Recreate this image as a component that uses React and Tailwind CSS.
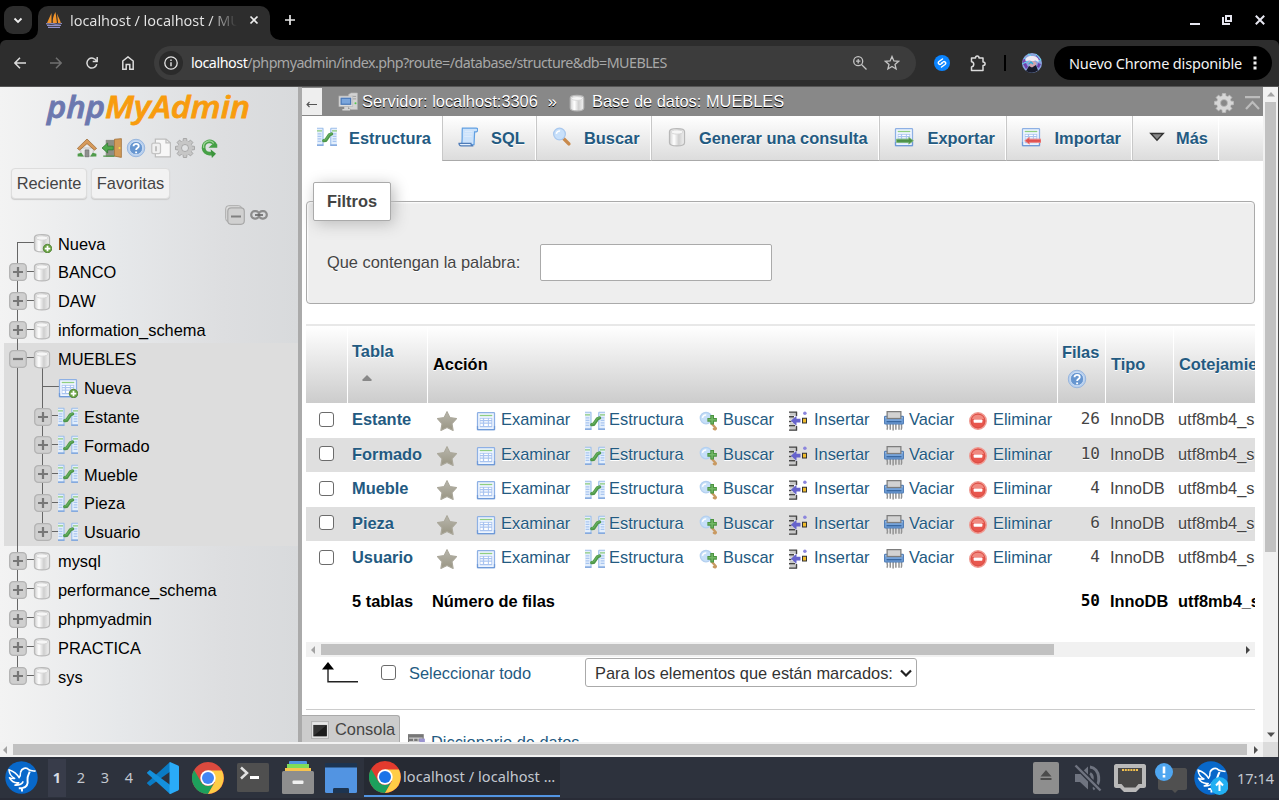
import React from "react";

const Svg = ({ className = "w-5 h-5", box = "0 0 16 16", children }) => (
  <svg viewBox={box} className={"block shrink-0 " + className} fill="none">
    {children}
  </svg>
);

/* ---------- phpMyAdmin icons ---------- */
const Structure = ({ className }) => (
  <Svg className={className}>
    <path d="M0 1h4.800v13.500H0zM11 1h5v13.500h-5z" fill="#e4effc" />
    <path d="M4.800 1v13.500H0M0 1h5M11 1v13.500h5M11 1h5" stroke="#9dbfea" strokeWidth=".9" />
    <path d="M0 14.500h5.200M10.600 14.500H16" stroke="#6f9ad8" strokeWidth=".8" />
    <path d="M0 3h4M12 3h4" stroke="#8ccc7c" strokeWidth="1" />
    <path d="M.5 5.500h3M.5 7.500h3M.5 9.500h3M.5 11.500h3M12.500 5.500h3M12.500 7.500h3M12.500 9.500h3M12.500 11.500h3" stroke="#a9c6f0" />
    <path d="M5.400 10.900l1.600-.3L10 6.200l1.600-.6" stroke="#4c9648" strokeWidth="2.700" strokeLinecap="round" strokeLinejoin="round" />
    <path d="M5.600 10.400l1.400-.3L10 5.800l1.400-.5" stroke="#66b05e" strokeWidth="1" strokeLinecap="round" strokeLinejoin="round" />
  </Svg>
);
const Browse = ({ className, children }) => (
  <Svg className={className}>
    <rect x="1.200" y="1.200" width="13.600" height="13.600" rx=".6" fill="#eef5fe" stroke="#8db0e4" />
    <path d="M1.200 12v2.800h13.600V12" stroke="#6f9ad8" />
    <path d="M3 3.600h10" stroke="#8fce80" />
    <path d="M3 5.500h10v7.500H3z" fill="#a9c4f0" />
    <path d="M3.500 6.200h2v1h-2zM6.500 6.200h3v1h-3zM10.300 6.200h2v1h-2zM3.500 8.200h2v1h-2zM6.500 8.200h3v1h-3zM10.300 8.200h2v1h-2zM3.500 10.200h2v1.800h-2zM6.500 10.200h3v1.800h-3zM10.300 10.200h2v1.800h-2z" fill="#fff" />
    {children}
  </Svg>
);
const Db = ({ className, plus }) => (
  <Svg className={className}>
    <defs>
      <linearGradient id="cyl" x1="0" x2="1" y1="0" y2="0">
        <stop offset="0" stopColor="#d0d0d0" />
        <stop offset=".3" stopColor="#fff" />
        <stop offset=".62" stopColor="#cfcfcf" />
        <stop offset="1" stopColor="#f2f2f2" />
      </linearGradient>
    </defs>
    <path d="M2 3.500C2 .5 14 .5 14 3.500v9c0 3.400-12 3.400-12 0z" fill="url(#cyl)" stroke="#b8b8b8" />
    <ellipse cx="8" cy="4" rx="4.800" ry="1.700" fill="#f6f6f6" stroke="#d2d2d2" strokeWidth=".7" />
    {plus && <Plus />}
  </Svg>
);
const Plus = () => (
  <g>
    <circle cx="12.400" cy="12.400" r="3.400" fill="#6ba344" stroke="#4d8030" strokeWidth=".7" />
    <path d="M12.400 10.200v4.400M10.200 12.400h4.400" stroke="#fff" strokeWidth="1.400" />
  </g>
);
const Search = () => (
  <Svg>
    <path d="M9.500 9.500l4 4" stroke="#c98a4c" strokeWidth="2.800" strokeLinecap="round" />
    <circle cx="6" cy="5.600" r="4.700" fill="#c8e0fa" stroke="#a9c8ee" />
    <path d="M3.500 5.500a2.600 2.600 0 0 1 3-2.300" stroke="#fff" strokeWidth="1.200" />
  </Svg>
);
const SearchPlus = () => (
  <Svg>
    <path d="M10.500 10.500l2.800 3c.8 1-.5 1.500-1.500 .8" stroke="#c99a62" strokeWidth="1.800" strokeLinecap="round" />
    <circle cx="5.600" cy="5.600" r="4.600" fill="#c6dff8" stroke="#b4d0f0" />
    <path d="M2.800 5.500a2.600 2.600 0 0 1 3-2.300" stroke="#fff" strokeWidth="1.200" />
    <path d="M10.500 3.200v7.600M6.700 7h7.600" stroke="#4b9440" strokeWidth="3" />
    <path d="M10.500 4v6M7.500 7h6" stroke="#72b866" strokeWidth="1.200" />
  </Svg>
);
const Scroll = () => (
  <Svg>
    <path d="M3.500 .8h11c1.700 0 1.700 3 0 3H13.300L12.800 14H2.800C3.800 11 3 5 3.500 .8z" fill="#cbe2fb" stroke="#62a0e2" />
    <path d="M.8 13h9.500c0 1.200.8 2 2 2H2.500C1.400 15 .8 14 .8 13z" fill="#e6f1fd" stroke="#4f7cb8" />
    <path d="M5.500 3.500h6M5 5.500h6.500M5 7.500h6" stroke="#dceafc" />
  </Svg>
);
const Export = () => (
  <Browse>
    <path d="M2 9.700h9.800V8.300l3.700 2.700-3.700 2.700v-1.400H2z" fill="#4c9148" stroke="#7cba72" strokeWidth=".6" />
  </Browse>
);
const Import = () => (
  <Browse>
    <path d="M16 9.700H6.700V8.300L3 11l3.700 2.700v-1.400H16z" fill="#e05050" stroke="#f08b88" strokeWidth=".7" />
  </Browse>
);
const Star = () => (
  <Svg>
    <defs>
      <linearGradient id="starfill" x1="0" x2="0" y1="0" y2="1">
        <stop offset="0" stopColor="#b8b6ac" />
        <stop offset="1" stopColor="#999583" />
      </linearGradient>
    </defs>
    <path d="M8 .5l2.300 4.700 5.300.9-3.600 4 .9 5.400L8 13.200l-4.900 2.300.9-5.400-3.600-4 5.300-.9z" fill="url(#starfill)" stroke="#aaa79a" strokeWidth=".9" strokeLinejoin="round" />
  </Svg>
);
const Insert = () => (
  <Svg>
    <path d="M.5.7h6v3h-6zM.5 5h4v2h-4zM.5 9.300h4v2h-4zM.5 12.700h6v3h-6z" fill="#c9c9c9" />
    <path d="M0 .9h6.500M6 1v3M0 4.600h4M0 8.400h2M0 11.800h5M0 15.300h6.500M6 12v3" stroke="#444" strokeWidth="1.100" />
    <path d="M1.500 7.700L6 3.700v2.500h3.200v3H6v2.500z" fill="#6663cc" />
    <rect x="10.800" y="5.800" width="3.200" height="3.800" fill="#f0bc2c" stroke="#333" strokeWidth=".8" />
    <circle cx="12.700" cy="1.800" r="1.400" fill="#8b85dd" />
  </Svg>
);
const Shred = () => (
  <Svg>
    <path d="M2.500 10c-.5 2 1.200 3-.2 5M5 10v5M7.300 10v5.500M9.500 10v5M12 10v5M14 10c-.3 2 .7 3-.3 5" stroke="#929292" strokeWidth="1.200" />
    <rect x=".5" y="4.200" width="15" height="6.200" rx=".6" fill="#75a3da" stroke="#4b7ab5" strokeWidth=".9" />
    <path d="M1 5.400h14" stroke="#a8c9ef" />
    <rect x="2.500" y=".5" width="11" height="5.500" fill="#d2d2d2" stroke="#7d7d7d" />
    <path d="M2 8.600h12" stroke="#315f99" />
  </Svg>
);
const Drop = () => (
  <Svg>
    <circle cx="8" cy="8" r="6.600" fill="#e85a50" stroke="#ef9a92" strokeWidth="1.200" />
    <circle cx="8" cy="8" r="5.400" fill="#e8574e" stroke="#d64c43" strokeWidth=".6" />
    <path d="M3.200 6.300a5 4.500 0 0 1 9.600 0" fill="#f08a80" />
    <rect x="4.500" y="6.800" width="7" height="2.500" rx=".6" fill="#fff" />
  </Svg>
);
const Help = ({ className }) => (
  <Svg className={className}>
    <circle cx="8" cy="8" r="7" fill="#b9d0ee" stroke="#8fb0dc" strokeWidth=".7" />
    <circle cx="8" cy="8" r="5.300" fill="#6796d0" stroke="#e5effb" strokeWidth=".5" />
    <path d="M6 6.600c0-2.600 4.200-2.500 4.200-.1C10.200 8 8.100 8 8.100 9.500M8.100 10.700v1.400" stroke="#fff" strokeWidth="1.500" />
  </Svg>
);
const GearShape = ({ fill, stroke }) => (
  <g>
    {[0, 45, 90, 135, 180, 225, 270, 315].map((a) => (
      <path key={a} d="M6.700 0.400h2.600l.5 3.500H6.200z" fill={fill} stroke={stroke} strokeWidth=".6" transform={`rotate(${a} 8 8)`} />
    ))}
    <circle cx="8" cy="8" r="4.300" stroke={fill} strokeWidth="2.900" />
    <circle cx="8" cy="8" r="2.800" stroke={stroke} strokeWidth=".6" />
  </g>
);
const Home = () => (
  <Svg>
    <path d="M3 8h10v6.500H3z" fill="#e9e9e9" stroke="#aaa" strokeWidth=".5" />
    <path d="M6.500 9.500h3V15h-3z" fill="#8f8f8f" stroke="#666" strokeWidth=".5" />
    <path d="M8 .8L.3 8.300l1.700 1.400L8 4.500l6 5.200 1.700-1.400z" fill="#d79a5a" stroke="#9c6a36" strokeWidth=".6" />
    <path d="M.5 12.500l3-.8 2 3H.5zM15.500 12.500l-3-.8-2 3h5z" fill="#4f9b4a" />
  </Svg>
);
const Exit = () => (
  <Svg>
    <path d="M3 1.500h7V15H3z" fill="#8d8f86" />
    <path d="M10 1l5.500-.5v15L10 14.500z" fill="#d29a57" stroke="#9d6b33" strokeWidth=".6" />
    <path d="M0 8l4.500-4v2.500H9v3H4.500V12z" fill="#4fa84c" stroke="#2f7a30" strokeWidth=".6" />
    <circle cx="14" cy="8" r=".8" fill="#f4e04a" />
    <path d="M1 14.500h9" stroke="#4e9448" />
  </Svg>
);
const Docs = () => (
  <Svg>
    <path d="M3.500 .8h8.500l3.500 3V15h-12z" fill="#f7f7f7" stroke="#bdbdbd" />
    <path d="M12 .8v3h3.500" stroke="#bdbdbd" />
    <rect x=".6" y="4" width="7" height="8.500" rx="1.500" fill="#f0f0f0" stroke="#c4c4c4" />
    <path d="M4 6.500v4" stroke="#bbb" strokeWidth="1.400" />
  </Svg>
);
const Reload = () => (
  <Svg>
    <path d="M12.300 5.800A4.900 4.900 0 1 0 7.500 12.500h2" stroke="#46a046" strokeWidth="3" />
    <path d="M8.500 9l4.300 3.500-3.300 3.500z" fill="#3c943c" />
    <path d="M6.800 7.800h7V5h-4z" fill="#46a046" />
    <path d="M11 4.300A4.500 4.500 0 0 0 3 8" stroke="#9bd494" strokeWidth="1" />
  </Svg>
);
const Toggle = ({ minus }) => (
  <Svg className="w-[18px] h-[18px]" box="0 0 18 18">
    <rect x=".7" y=".7" width="16.600" height="16.600" rx="3.600" fill="#cfcfcf" stroke="#b3b3b3" strokeWidth="1.300" />
    <path d={minus ? "M4 9h10" : "M4 9h10M9 4v10"} stroke="#777" strokeWidth="2.200" />
  </Svg>
);

/* ---------- browser chrome ---------- */
const WF = "font-['Noto_Sans','Open_Sans',sans-serif]";

function Sailboat() {
  return (
    <Svg className="w-4 h-4">
      <path d="M5.500 1L1 11h4.500zM9.500 0C7 4 6.500 8 6.800 11H11zM11 1.500c1.500 4 3 6 3.800 9.500H12z" fill="#f0932b" />
      <path d="M0 11.500c3 1 5-.5 8 .4s5 .3 8-.5M1 13.500h14M2 15.300h12" stroke="#9090c8" strokeWidth="1.200" />
    </Svg>
  );
}

function TabStrip() {
  return (
    <div className="h-10 bg-black flex items-end shrink-0">
      <div className="self-center w-7 h-7 ml-1 rounded-[9px] bg-[#2d2d2d] flex items-center justify-center">
        <Svg className="w-3 h-3" box="0 0 12 12"><path d="M2.500 4.500L6 8l3.500-3.500" stroke="#eee" strokeWidth="1.800" /></Svg>
      </div>
      <div className="relative ml-[6px] w-[232px] h-[34px] rounded-t-[10px] bg-[#2d2d2d] flex items-center pl-2 pb-[6px] pr-[11px]">
        <svg viewBox="0 0 10 10" className="absolute -left-[10px] bottom-0 w-[10px] h-[10px]"><path d="M10 0v10H0A10 10 0 0 0 10 0z" fill="#2d2d2d" /></svg>
        <svg viewBox="0 0 10 10" className="absolute -right-[10px] bottom-0 w-[10px] h-[10px]"><path d="M0 0v10h10A10 10 0 0 1 0 0z" fill="#2d2d2d" /></svg>
        <Sailboat />
        <div className={"ml-2 w-[167px] overflow-hidden whitespace-nowrap text-[14.5px] leading-5 tracking-[-0.05px] text-transparent bg-clip-text bg-[linear-gradient(to_right,#e6e6e6_84%,#2d2d2d_100%)] " + WF}>localhost / localhost / MUEBLES</div>
        <Svg className="ml-auto w-[10px] h-[10px]" box="0 0 10 10"><path d="M1.500 1.500l7 7M8.500 1.500l-7 7" stroke="#eee" strokeWidth="1.700" /></Svg>
      </div>
      <Svg className="ml-[15px] mb-[15px] w-[10px] h-[10px]" box="0 0 10 10"><path d="M5 0v10M0 5h10" stroke="#e8e8e8" strokeWidth="1.700" /></Svg>
      <div className="ml-auto flex items-center h-full pr-[14px]">
        <Svg className="w-[10px] h-[10px]" box="0 0 10 10"><path d="M0 9h10" stroke="#e6e6f0" strokeWidth="2" /></Svg>
        <Svg className="ml-[22px] w-[10px] h-[10px]" box="0 0 10 10"><path d="M4 1h5v5H4z" stroke="#e6e6f0" strokeWidth="2" /><path d="M1 2v7h7" stroke="#e6e6f0" strokeWidth="2" /></Svg>
        <Svg className="ml-[23px] w-[10px] h-[10px]" box="0 0 10 10"><path d="M.8.8l8.400 8.400M9.200.8L.8 9.200" stroke="#e6e6f0" strokeWidth="2" /></Svg>
      </div>
    </div>
  );
}

function Toolbar() {
  return (
    <div className="bg-black shrink-0">
      <div className="h-[47px] bg-[#2d2d2d] rounded-t-[6px] border-b border-[#555] flex items-center">
        <Svg className="ml-[14px] w-3 h-3" box="0 0 12 12"><path d="M12 6H1.200M6 .8L.9 6 6 11.200" stroke="#dcdcdc" strokeWidth="1.500" /></Svg>
        <Svg className="ml-6 w-3 h-3" box="0 0 12 12"><path d="M0 6h10.800M6 .8L11.100 6 6 11.200" stroke="#707070" strokeWidth="1.500" /></Svg>
        <Svg className="ml-[24px] w-3 h-3" box="0 0 12 12"><path d="M10.800 7.200A5 5 0 1 1 10.500 4M11.200 0v4.500H6.700" stroke="#dcdcdc" strokeWidth="1.500" /></Svg>
        <Svg className="ml-6 w-3 h-[14px]" box="0 0 12 14"><path d="M.8 5L6 .9 11.200 5v8.200H7.800V8.500H4.200v4.700H.8z" stroke="#dcdcdc" strokeWidth="1.500" /></Svg>
        <div className="ml-5 w-[762px] h-[34px] rounded-full bg-[#3c3c3c] flex items-center pl-[5px] pr-[16px]">
          <div className="w-6 h-6 rounded-full bg-[#2b2b2b] flex items-center justify-center">
            <Svg className="w-[14px] h-[14px]" box="0 0 14 14"><circle cx="7" cy="7" r="6.200" stroke="#e4e4e4" strokeWidth="1.300" /><path d="M7 6.200v4M7 3.500v1.500" stroke="#e4e4e4" strokeWidth="1.400" /></Svg>
          </div>
          <div className={"ml-2 whitespace-nowrap text-[14.3px] leading-5 tracking-[-0.56px] text-[#a8a8a8] " + WF}><span className="text-white tracking-[-0.45px]">localhost</span>/phpmyadmin/index.php?route=/database/structure&amp;db=MUEBLES</div>
          <Svg className="ml-auto w-[14px] h-[14px]" box="0 0 14 14"><circle cx="5.200" cy="5.200" r="4.500" stroke="#c4c4c4" strokeWidth="1.300" /><path d="M8.500 8.500l5 5M5.200 3v4.400M3 5.200h4.400" stroke="#c4c4c4" strokeWidth="1.300" /></Svg>
          <Svg className="ml-[17px] w-4 h-4"><path d="M8 1.500l1.900 4.400 4.700.4-3.600 3.100 1.100 4.600L8 11.500 3.900 14 5 9.400 1.400 6.300l4.700-.4z" stroke="#c4c4c4" strokeWidth="1.300" /></Svg>
        </div>
        <Svg className="ml-[18px] w-4 h-4"><circle cx="8" cy="8" r="8" fill="#0a84ff" /><path d="M8.500 4L5 6.500C3 8 5.500 10.300 7 9l1.500-1M7.500 12L11 9.500C13 8 10.500 5.700 9 7L7.500 8" stroke="#fff" strokeWidth="1.500" strokeLinecap="round" /></Svg>
        <Svg className="ml-5 w-[17px] h-[17px]" box="0 0 17 17"><path d="M1.500 3h4c0-2.700 3.500-2.700 3.500 0h4v4c2.800 0 2.800 3.500 0 3.500v5h-11.500V12c3-.3 3-5 0-5.200z" stroke="#dcdcdc" strokeWidth="1.500" strokeLinejoin="round" /></Svg>
        <div className="ml-[17px] w-[2px] h-4 bg-black" />
        <Svg className="ml-4 w-5 h-5" box="0 0 20 20">
          <circle cx="10" cy="10" r="10" fill="#8aa4de" />
          <path d="M2 5l4 3-6 3M14 1l5 6-4 1M6 1l3 2" fill="#7b43b4" stroke="#5be0f0" />
          <path d="M3.500 8C3 4 7 2.500 11 3s6.500 2.500 5.500 6l-3-1.500-3.500 1-2-1z" fill="#f1eaf4" />
          <path d="M6.500 9c2-1.500 7-1.500 8 1.500l-2 4H8z" fill="#d0a4ae" />
          <path d="M1 11l3-1 2 4-2 2zM16 10l3 1-2 4-2-1z" fill="#6c3fae" />
          <path d="M4 18l3-5 3 1.500 4-2.500 2 5.500a10 10 0 0 1-12 .5z" fill="#171a2b" />
          <path d="M7 11l2-2 2 2" stroke="#28aee0" strokeWidth="1.500" />
        </Svg>
        <div className="ml-3 w-[218px] h-[34px] rounded-full bg-black flex items-center pl-[15px] pr-[15px]">
          <span className={"whitespace-nowrap text-[14.5px] leading-5 tracking-[-0.16px] text-[#f2f2f2] " + WF}>Nuevo Chrome disponible</span>
          <Svg className="ml-auto w-[4px] h-[14px]" box="0 0 4 14"><path d="M.5.500h3v3h-3zM.5 5.500h3v3h-3zM.5 10.500h3v3h-3z" fill="#f2f2f2" /></Svg>
        </div>
      </div>
    </div>
  );
}

/* ---------- sidebar ---------- */
function TreeRow({ icon, toggle, label, sub, first, last, inner, innerEnd }) {
  return (
    <div className="relative h-[28.860px] flex items-center text-[16.400px] text-black">
      <div className={"absolute left-[13px] w-px bg-[#666] " + (first ? "top-1/2 bottom-0" : last ? "top-0 h-1/2" : "top-0 bottom-0")} />
      {inner && <div className={"absolute left-[38px] w-px bg-[#666] " + (inner === "start" ? "top-1/2 bottom-0" : innerEnd ? "top-0 h-1/2" : "top-0 bottom-0")} />}
      <div className={"absolute top-[13px] h-px bg-[#666] " + (sub ? "left-[38px] w-[18px]" : "left-[13px] w-[18px]")} />
      <div className={"relative shrink-0 " + (sub ? "ml-[30px] w-[24px]" : "ml-[5px] w-[23px]")}>{toggle && <Toggle minus={toggle === "minus"} />}</div>
      <div className="relative shrink-0 w-5">{icon}</div>
      <span className="relative ml-[6px] pt-px">{label}</span>
    </div>
  );
}

function Sidebar() {
  return (
    <aside className="w-[298px] shrink-0 h-full bg-[linear-gradient(to_right,#f3f3f3_0%,#e6e8ea_40%,#dddee0_75%,#d8dadc_100%)] overflow-hidden">
      <svg viewBox="0 0 298 46" className="block w-[298px] h-[46px]">
        <g fontFamily="'Open Sans', 'Noto Sans', sans-serif" fontStyle="italic" fontWeight="600" fontSize="30">
          <text x="47" y="31" textLength="58" lengthAdjust="spacingAndGlyphs" fill="#6c78af" stroke="#6c78af" strokeWidth=".8">php</text>
          <text x="105" y="31" textLength="145" lengthAdjust="spacingAndGlyphs" fill="#f89c0e" stroke="#f89c0e" strokeWidth=".8">MyAdmin</text>
        </g>
      </svg>
      <div className="flex items-center pl-[77px] gap-[4.500px] h-[30px]">
        <Home />
        <Exit />
        <Help />
        <Docs />
        <Svg><GearShape fill="#c6c6c6" stroke="#999" /></Svg>
        <Reload />
      </div>
      <div className="flex pl-[11px] gap-1 mt-[5px] text-[16.400px] text-[#444]">
        <div className="w-[76px] h-[31px] rounded border border-[#ddd] bg-[#f2f2f2] shadow-[0_1px_1px_#ccc] flex items-center justify-center">Reciente</div>
        <div className="w-[79px] h-[31px] rounded border border-[#ddd] bg-[#f2f2f2] shadow-[0_1px_1px_#ccc] flex items-center justify-center">Favoritas</div>
      </div>
      <div className="flex items-center pl-[225px] mt-[6px] h-5 gap-[5px]">
        <Svg box="0 0 20 20">
          <rect x=".7" y=".7" width="16" height="16" rx="3" fill="#dcdcdc" stroke="#aaa" />
          <rect x="2.800" y="2.800" width="16.500" height="16.500" rx="3.500" fill="#d0d0d0" stroke="#a8a8a8" strokeWidth="1.200" />
          <path d="M6 11.500h10" stroke="#808080" strokeWidth="2" />
        </Svg>
        <Svg className="w-[18px] h-[12px]" box="0 0 18 12">
          <rect x="1.200" y="2.200" width="8" height="7.400" rx="3.500" stroke="#8c8c8c" strokeWidth="2.200" />
          <rect x="8.800" y="2.200" width="8" height="7.400" rx="3.500" stroke="#8c8c8c" strokeWidth="2.200" />
          <path d="M5 6h8" stroke="#666" strokeWidth="1.600" />
        </Svg>
      </div>
      <div className="mt-[4px] pl-1">
        <TreeRow first icon={<Db plus />} label="Nueva" />
        <TreeRow toggle="plus" icon={<Db />} label="BANCO" />
        <TreeRow toggle="plus" icon={<Db />} label="DAW" />
        <TreeRow toggle="plus" icon={<Db />} label="information_schema" />
        <div className="bg-[#ddd] -mt-px pt-px">
          <TreeRow toggle="minus" inner="start" icon={<Db />} label="MUEBLES" />
          <TreeRow sub inner="mid" icon={<Browse><Plus /></Browse>} label="Nueva" />
          <TreeRow sub inner="mid" toggle="plus" icon={<Structure />} label="Estante" />
          <TreeRow sub inner="mid" toggle="plus" icon={<Structure />} label="Formado" />
          <TreeRow sub inner="mid" toggle="plus" icon={<Structure />} label="Mueble" />
          <TreeRow sub inner="mid" toggle="plus" icon={<Structure />} label="Pieza" />
          <TreeRow sub inner="mid" innerEnd toggle="plus" icon={<Structure />} label="Usuario" />
        </div>
        <TreeRow toggle="plus" icon={<Db />} label="mysql" />
        <TreeRow toggle="plus" icon={<Db />} label="performance_schema" />
        <TreeRow toggle="plus" icon={<Db />} label="phpmyadmin" />
        <TreeRow toggle="plus" icon={<Db />} label="PRACTICA" />
        <TreeRow last toggle="plus" icon={<Db />} label="sys" />
      </div>
    </aside>
  );
}

/* ---------- main panel ---------- */
const Server = () => (
  <Svg>
    <path d="M8.500 2l2-1.200h5V14h-5l-2-1z" fill="#d3d3d3" stroke="#b5b5b5" strokeWidth=".5" />
    <path d="M11 3.500h3.500M11 5.500h3.500" stroke="#999" strokeWidth=".7" />
    <rect x=".8" y="3.300" width="11" height="8.200" fill="#dedede" stroke="#bbb" strokeWidth=".6" />
    <rect x="2" y="4.500" width="8.600" height="5.800" fill="#4b79b8" />
    <rect x="3" y="5.500" width="6.600" height="3.800" fill="#7ba6dc" />
    <path d="M5 11.700h3v1.800h1.700v1.300H3.500v-1.300H5z" fill="#d4d4d4" />
    <circle cx="14" cy="9" r=".8" fill="#4fc74a" />
  </Svg>
);

function Tab({ w, icon, gap, label, active, pad }) {
  return (
    <div className={"h-full flex items-center shrink-0 font-bold text-[16.400px] text-[#235a81] " + w + " " + pad + " " + (active ? "bg-white" : "pt-px bg-[linear-gradient(#fff,#dcdcdc)] border-l border-l-[#c8c8c8] border-b border-b-[#aaa] shadow-[inset_-1px_0_0_#fff]")}>
      <div className="shrink-0 pb-[3px]">{icon}</div>
      <span className={"whitespace-nowrap [text-shadow:0_1px_0_#fff] " + gap}>{label}</span>
    </div>
  );
}

const link = "text-[#235a81]";

function Row({ name, rows, odd }) {
  return (
    <div className={"h-[34.500px] flex items-center w-[949px] overflow-hidden whitespace-nowrap text-[16.400px] leading-[25px] text-[#444] [text-shadow:0_1px_0_#fff] " + (odd ? "bg-[#dfdfdf]" : "bg-white")}>
      <div className="w-[46px] shrink-0 pl-[13px] pb-[2px]"><div className="w-[15px] h-[15px] border border-[#6b6b6b] rounded-[3px] bg-white" /></div>
      <div className={"w-[84px] shrink-0 font-bold pb-px " + link}>{name}</div>
      <div className={"w-[622px] shrink-0 flex items-center pb-px [&_svg]:mt-[3px] " + link}>
        <div className="w-[40px] pl-[1px]"><Star /></div>
        <div className="w-[109px] flex items-center gap-[5px]"><Browse />Examinar</div>
        <div className="w-[114px] flex items-center gap-[4px]"><Structure />Estructura</div>
        <div className="w-[90px] flex items-center gap-[4px]"><SearchPlus />Buscar</div>
        <div className="w-[95px] flex items-center gap-[5px]"><Insert />Insertar</div>
        <div className="w-[84px] flex items-center gap-[5px]"><Shred />Vaciar</div>
        <div className="flex items-center gap-[5px]"><Drop />Eliminar</div>
      </div>
      <div className="w-[42px] shrink-0 text-right pb-[2px] text-base font-['DejaVu_Sans_Mono',monospace]">{rows}</div>
      <div className="ml-[10px] w-[68px] shrink-0 pb-px">InnoDB</div>
      <div className="pb-px">utf8mb4_spanish_ci</div>
    </div>
  );
}

function HeadCell({ className, children }) {
  return <div className={"shrink-0 h-full flex flex-col justify-center items-start font-bold [text-shadow:0_1px_0_#fff] " + className}>{children}</div>;
}

function Main() {
  return (
    <main className="relative w-[961px] shrink-0 h-full bg-white overflow-hidden">
      <div className="h-[29px] bg-[#888] flex items-start whitespace-nowrap text-[16.400px] text-white [text-shadow:0_1px_0_#000]">
        <div className="w-5 h-[27px] mt-px shrink-0 bg-[#eee] flex items-center justify-center pt-[6px] pr-[2px]">
          <Svg className="w-[11px] h-[7px]" box="0 0 11 7"><path d="M11 3.500H1M3.500 1L1 3.500 3.500 6" stroke="#555" strokeWidth="1.100" /></Svg>
        </div>
        <div className="flex items-center h-[29px] flex-1 pl-[16px]">
          <Server />
          <span className="ml-1">Servidor: localhost:3306</span>
          <span className="ml-[10px]">»</span>
          <Db className="ml-[10px] w-5 h-[18px] mt-[3px]" />
          <span className="ml-[5px]">Base de datos: MUEBLES</span>
          <Svg className="ml-auto w-5 h-5 mt-[2px]"><GearShape fill="#d6d6d6" stroke="#bbb" /></Svg>
          <Svg className="ml-[11px] mr-[3px] mt-[3px] w-[15px] h-[14px]" box="0 0 15 14"><path d="M0 1.200h15M1 13l6.500-7 6.500 7" stroke="#bcbcbc" strokeWidth="2.200" /></Svg>
        </div>
      </div>
      <nav className="h-[45px] flex">
        <Tab active w="w-[140px]" pad="pl-[15px]" gap="ml-[12px]" icon={<Structure />} label="Estructura" />
        <Tab w="w-[94px]" pad="pl-[15px]" gap="ml-[13px]" icon={<Scroll />} label="SQL" />
        <Tab w="w-[115px]" pad="pl-[15px]" gap="ml-[12px]" icon={<Search />} label="Buscar" />
        <Tab w="w-[228px]" pad="pl-[15px]" gap="ml-[12px]" icon={<Db />} label="Generar una consulta" />
        <Tab w="w-[127px]" pad="pl-[14px]" gap="ml-[13.500px]" icon={<Export />} label="Exportar" />
        <Tab w="w-[126px]" pad="pl-[14px]" gap="ml-[13.500px]" icon={<Import />} label="Importar" />
        <Tab w="w-[87px]" pad="pl-[14px]" gap="ml-[9px]" icon={<Svg><path d="M3 5.200h10L8 10.500z" fill="#888" stroke="#333" strokeWidth="1.100" /></Svg>} label="Más" />
        <div className="flex-1 border-b border-[#ddd] bg-[linear-gradient(#fff,#dcdcdc)]" />
      </nav>

      <section className="relative mt-10 ml-1 w-[949px] h-[103px] rounded border border-[#aaa] bg-[#eee] shadow-[inset_1px_1px_2px_#fff] text-[16.400px] text-[#444] flex items-center pl-5 pt-5">
        <h2 className="absolute left-[6px] -top-[20px] w-[78px] h-[39px] rounded-[2px] border border-[#aaa] bg-white shadow-[3px_3px_15px_#bbb] flex items-center justify-center font-bold">Filtros</h2>
        <label className="w-[213px] [text-shadow:0_1px_0_#fff]">Que contengan la palabra:</label>
        <div className="w-[232px] h-[37px] rounded-[2px] border border-[#aaa] bg-white" />
      </section>

      <section className="mt-5 ml-1 w-[949px]">
        <div className="h-[79px] border-t-2 border-t-[#e8e8e8] flex text-[16.400px] text-[#235a81] overflow-hidden bg-[linear-gradient(#fff,#ccc)]">
          <HeadCell className="w-[42px] border-r border-white"></HeadCell>
          <HeadCell className="w-[80px] pl-1 border-r border-white">
            <span className="leading-6">Tabla</span>
            <Svg className="ml-[10px] mt-[5px] mb-[5px] w-[10px] h-[18px]" box="0 0 10 18"><path d="M5 7L.5 11.500V13h9v-1.500z" fill="#888" /></Svg>
          </HeadCell>
          <HeadCell className="w-[630px] pl-[5px] border-r border-white text-black">Acción</HeadCell>
          <HeadCell className="w-[48px] pl-1 border-r border-white">
            <span className="leading-6">Filas</span>
            <Help className="ml-[5px] mt-[5px] mb-px w-5 h-5" />
          </HeadCell>
          <HeadCell className="w-[68px] pl-[5px] border-r border-white">Tipo</HeadCell>
          <HeadCell className="pl-[5px] whitespace-nowrap">Cotejamiento</HeadCell>
        </div>
        <Row name="Estante" rows="26" />
        <Row name="Formado" rows="10" odd />
        <Row name="Mueble" rows="4" />
        <Row name="Pieza" rows="6" odd />
        <Row name="Usuario" rows="4" />
        <div className="h-[66.500px] flex items-start pt-[13px] text-[16.400px] leading-6 font-bold text-black overflow-hidden whitespace-nowrap">
          <div className="w-[80px] ml-[46px] shrink-0">5 tablas</div>
          <div className="w-[626px] shrink-0">Número de filas</div>
          <div className="w-[42px] shrink-0 text-right text-base font-['DejaVu_Sans_Mono',monospace]">50</div>
          <div className="ml-[10px] w-[68px] shrink-0">InnoDB</div>
          <div>utf8mb4_spanish_ci</div>
        </div>
        <div className="h-[15px] bg-[#f1f1f1] flex items-center">
          <Svg className="ml-1 w-[6px] h-[8px]" box="0 0 6 8"><path d="M5 0v8L1 4z" fill="#a3a3a3" /></Svg>
          <div className="ml-[5px] w-[733px] h-[11px] bg-[#c1c1c1]" />
          <Svg className="ml-auto mr-1 w-[6px] h-[8px]" box="0 0 6 8"><path d="M1 0v8l4-4z" fill="#444" /></Svg>
        </div>
      </section>

      <section className="h-[31px] flex items-center pl-5 text-[16.400px]">
        <Svg className="w-9 h-[22px]" box="0 0 36 22"><path d="M6 5v14.800H36" stroke="#222" strokeWidth="1.400" /><path d="M6 0l6 7.500H0z" fill="#000" /></Svg>
        <div className="ml-[22.500px] w-[15px] h-[15px] border border-[#6b6b6b] rounded-[3px] bg-white" />
        <span className={"ml-[13.500px] w-[176px] pt-px " + link}>Seleccionar todo</span>
        <div className="w-[332px] h-[29px] border border-[#aaa] rounded-[3px] flex items-center pl-[9px] pr-[4px] pt-px whitespace-nowrap text-[#333]">
          Para los elementos que están marcados:
          <Svg className="ml-auto w-3 h-2" box="0 0 12 8"><path d="M1 1.500l5 5 5-5" stroke="#222" strokeWidth="2.200" /></Svg>
        </div>
      </section>
      <div className="mt-[21px] ml-1 w-[949px] h-px bg-[#ccc]" />
      <div className="mt-[20px] ml-[106px] flex items-center gap-[5px] text-[16.400px]">
        <Svg className="w-[18px] h-[18px]"><rect x="0" y="1" width="14" height="13" fill="#777" /><path d="M1 4.500h12M1 7.500h12M5 4v9M9 4v9" stroke="#ccc" /><rect x="10" y="5" width="5" height="5" fill="#9a93d0" /></Svg>
        <span className={link}>Diccionario de datos</span>
      </div>

      <div className="absolute left-0 bottom-0 w-[98px] h-[27px] rounded-tr-[3px] border-t border-r border-[#aaa] bg-[#ccc] flex items-center pl-[9px] pt-px text-[16.400px] text-[#444]">
        <Svg className="w-[18px] h-[18px] mt-px"><rect x=".5" y=".5" width="15" height="15" fill="#e8e8e8" stroke="#b5b5b5" /><rect x="2" y="3.500" width="12" height="10" fill="#333" /><path d="M2 13.500l12-10v10z" fill="#1c1c1c" /></Svg>
        <span className="ml-[6px]">Consola</span>
      </div>
    </main>
  );
}

function VScroll() {
  return (
    <div className="w-[15px] shrink-0 h-full bg-[#f1f1f1] flex flex-col items-center">
      <Svg className="mt-[5px] w-2 h-[5px]" box="0 0 8 5"><path d="M0 4.500h8L4 0z" fill="#a3a3a3" /></Svg>
      <div className="mt-[5px] w-[11px] h-[450px] bg-[#c1c1c1]" />
      <Svg className="mt-auto mb-[5px] w-2 h-[5px]" box="0 0 8 5"><path d="M0 .500h8L4 5z" fill="#505050" /></Svg>
    </div>
  );
}

/* ---------- desktop panel ---------- */
const Hummingbird = ({ className = "w-[33px] h-[33px]", children }) => (
  <Svg className={className} box="0 0 34 34">
    <circle cx="17" cy="17" r="16.700" fill="#0868ca" />
    <path d="M31.500 10.500c-3-.4-5-.3-7-1.500-2.500-3-7.500-1.500-8.500 2.600" stroke="#fff" strokeWidth="1.700" strokeLinejoin="round" />
    <path d="M16 11.500c.2 3-.4 4.500-1.500 5.700C12.500 13.500 8.500 10.500 4 9c.6 5 3 7.500 6 9-2 .4-3.500 0-5.500-.8 2 4 5.500 5.600 9.700 5.200-1 1.200-2.400 2-4 2.600 4 .2 7.500-1.500 8.600-4" stroke="#fff" strokeWidth="1.500" strokeLinejoin="round" />
    <path d="M25.500 11c-1 3-3 5-2.300 8.500.8 4.500-1 7.500-5.500 8.500h-3.500M17.500 28v3.500" stroke="#fff" strokeWidth="2" />
    {children}
  </Svg>
);
const Chrome = ({ inner = "#4285f4", red = "#db4a3e" }) => (
  <Svg className="w-8 h-8" box="0 0 32 32">
    <circle cx="16" cy="16" r="16" fill={red} />
    <path d="M2.140 8L9.070 20a8 8 0 0 0 13.860 0L16 32A16 16 0 0 1 2.140 8z" fill="#1da05c" />
    <path d="M29.860 8.500H16v7.500l6.930 4L16 32A16 16 0 0 0 29.860 8.500z" fill="#ffcd46" />
    <circle cx="16" cy="16" r="7.700" fill="#fff" />
    <circle cx="16" cy="16" r="6" fill={inner} />
  </Svg>
);

function Taskbar() {
  return (
    <div className={"h-[43px] shrink-0 bg-[#2d323d] border-b-2 border-[#282b36] flex items-center text-[#c3c8d0] " + WF}>
      <Hummingbird className="ml-[5px] w-[33px] h-[33px]" />
      <div className="ml-[10px] w-[18px] h-[38px] bg-[#383c4a] flex items-center justify-center text-[14.500px] font-bold text-[#d8dce4]">1</div>
      <div className="flex text-[14.500px]">
        <span className="w-[24px] pl-[6px] text-center">2</span>
        <span className="w-[24px] pl-[6px] text-center">3</span>
        <span className="w-[24px] pl-[6px] text-center">4</span>
      </div>
      <Svg className="ml-[9px] w-8 h-8" box="0 0 32 32">
        <path d="M23 0l1 9L3 24 .3 21.700c-.4-.4-.4-1 0-1.300z" fill="#0a7bc4" />
        <path d="M2.900 8L24 23.500 23 32 .3 11.500c-.4-.4-.4-1 0-1.300z" fill="#1490dc" />
        <path d="M23 0l8 3.500c.6.3 1 .8 1 1.500v22c0 .7-.4 1.200-1 1.500L23.500 32c-.8 0-1-.5-1-1V1c0-.5.200-.8.500-1z" fill="#2aabf8" />
      </Svg>
      <div className="ml-[13px]"><Chrome /></div>
      <Svg className="ml-[13px] mb-px w-8 h-[29px]" box="0 0 32 29"><rect width="32" height="29" rx="1.500" fill="#4f4f4f" /><path d="M4 4.500l6 5.500-6 5.500" stroke="#e3e3e3" strokeWidth="2.500" /><path d="M13 14.500h9" stroke="#fff" strokeWidth="3" /></Svg>
      <Svg className="ml-[13px] w-8 h-[33px]" box="0 0 32 33"><rect x="7" y="0" width="18" height="4" rx="1" fill="#4f95e2" /><rect x="5" y="3" width="22" height="4" fill="#7fdc59" /><rect x="3" y="7" width="26" height="4" fill="#f7c34e" /><rect y="10" width="32" height="23" rx="1.500" fill="#8e8e8e" /><rect x="10.500" y="19.500" width="11" height="3.500" rx="1" fill="#f0f0f0" /></Svg>
      <Svg className="ml-[11px] w-8 h-[30px]" box="0 0 32 30"><rect width="32" height="30" rx="1.500" fill="#5294e2" /><path d="M0 0h32v4.500H0z" fill="#1d3450" /><path d="M8 30v-3.500c0-1 .5-1.500 1.500-1.500h13c1 0 1.500.5 1.500 1.500V30z" fill="#1d3450" /></Svg>
      <div className="ml-[7px] w-[196px] h-[39px] bg-[#262a33] border-b-2 border-[#5294e2] flex items-center pl-[5px] whitespace-nowrap text-[14.500px]">
        <Chrome inner="#1a73e8" red="#e33b2e" />
        <span className="ml-[2px] tracking-[0.070px]">localhost / localhost …</span>
      </div>
      <div className="ml-auto flex items-center pr-[5px]">
        <Svg className="w-[26px] h-8" box="0 0 26 32"><rect width="26" height="32" rx="2" fill="#8e8e8e" /><path d="M13 8l5.500 6.500h-11zM7.500 16h11v2h-11z" fill="#4c4c4c" /></Svg>
        <Svg className="ml-[15px] w-[28px] h-[28px]" box="0 0 28 28"><path d="M1 10h5l8-7.500v23L6 18H1z" fill="#6f7480" /><path d="M16 9.500c3 1.500 3 7 0 8.500M16 3c10 1 12 18 3 22" stroke="#6f7480" strokeWidth="3" /><path d="M2 2l25 25" stroke="#2d323d" strokeWidth="5" /><path d="M1.500 1.500l25 25" stroke="#6f7480" strokeWidth="2.400" /></Svg>
        <Svg className="ml-[12px] w-8 h-[28px]" box="0 0 32 28"><path d="M2 0h28c1 0 2 1 2 2v20c0 1-1 2-2 2h-4l-4 4H10l-4-4H2c-1 0-2-1-2-2V2c0-1 1-2 2-2z" fill="#b9b9b9" /><path d="M4 4h24v16h-3.500l-3 3.500h-11L7.500 20H4z" fill="#474747" /><path d="M8 6h16" stroke="#f2c14e" strokeWidth="2" strokeDasharray="2 .8" /></Svg>
        <Svg className="ml-[9px] w-8 h-[30px]" box="0 0 32 30"><path d="M5 5h25c1 0 2 1 2 2v18c0 1-1 2-2 2h-7l-3 3-3-3H5c-1 0-2-1-2-2V7c0-1 1-2 2-2z" fill="#505050" /><circle cx="9" cy="9" r="9" fill="#4fa6f0" /><path d="M9 3.500v7M9 12v2.500" stroke="#fff" strokeWidth="2.600" /></Svg>
        <Hummingbird className="ml-[7px] w-[34px] h-[34px]">
          <circle cx="25.500" cy="25" r="9" fill="#22b0f2" />
          <path d="M25.500 30v-8M22 24.500l3.500-3.700 3.500 3.700" stroke="#fff" strokeWidth="2" />
        </Hummingbird>
        <span className="ml-[9px] text-[14.500px] leading-5">17:14</span>
      </div>
    </div>
  );
}

export default function App() {
  return (
    <div className="w-[1279px] h-[800px] overflow-hidden flex flex-col bg-black font-['Liberation_Sans',Arial,sans-serif]">
      <TabStrip />
      <Toolbar />
      <div className="h-[670px] shrink-0 flex">
        <div className="w-[1278px]">
          <div className="h-[655px] flex">
            <Sidebar />
            <div className="w-1 shrink-0 bg-[#aaa]" />
            <Main />
            <VScroll />
          </div>
          <div className="h-[15px] bg-[#f1f1f1] flex items-center">
            <Svg className="ml-[2px] w-[6px] h-2" box="0 0 6 8"><path d="M5 0v8L1 4z" fill="#a3a3a3" /></Svg>
            <div className="ml-[5px] w-[1234px] h-[11px] bg-[#c1c1c1]" />
            <Svg className="ml-[6px] w-[6px] h-2" box="0 0 6 8"><path d="M1 0v8l4-4z" fill="#505050" /></Svg>
            <div className="ml-auto w-[15px] h-full bg-[#dcdcdc]" />
          </div>
        </div>
        <div className="w-px bg-[#4a4a4a]" />
      </div>
      <Taskbar />
    </div>
  );
}
